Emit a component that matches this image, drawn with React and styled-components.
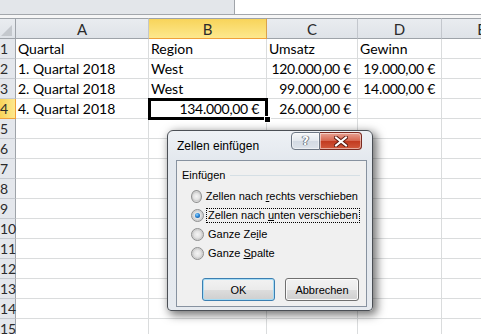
import React from 'react';
import styled, { createGlobalStyle, css } from 'styled-components';

const GlobalStyle = createGlobalStyle`
  html, body { margin: 0; padding: 0; background: #fff; overflow: hidden; }
  #root { width: 481px; height: 334px; position: relative; overflow: hidden; }
`;

const columns = ['A', 'B', 'C', 'D', 'E'];
const rows = [
  [{ t: 'Quartal' }, { t: 'Region' }, { t: 'Umsatz' }, { t: 'Gewinn' }, {}],
  [{ t: '1. Quartal 2018' }, { t: 'West' }, { t: '120.000,00 €', num: true }, { t: '19.000,00 €', num: true }, {}],
  [{ t: '2. Quartal 2018' }, { t: 'West' }, { t: '99.000,00 €', num: true }, { t: '14.000,00 €', num: true }, {}],
  [{ t: '4. Quartal 2018' }, { t: '134.000,00 €', num: true, selected: true }, { t: '26.000,00 €', num: true }, {}, {}],
];
while (rows.length < 15) rows.push([{}, {}, {}, {}, {}]);

const Sheet = styled.div`
  position: relative;
  width: 481px;
  height: 334px;
  font-family: Lato, 'Liberation Sans', sans-serif;
`;

const TopBar = styled.div`
  display: flex;
  height: 14px;
  border-bottom: 1px solid #a3a7ac;
`;

const TopLeft = styled.div`
  width: 234px;
  background: #e3e6ea;
  border-right: 1px solid #a0a4a9;
`;

const Gap = styled.div`
  height: 3px;
  background: #f6f6f6;
`;

const Grid = styled.div`
  display: grid;
  grid-template-columns: 16px 133px 118px 91px 84px 80px;
  grid-template-rows: 21px;
  grid-auto-rows: 20px;
  width: 522px;
`;

const HeadCell = styled.div`
  box-sizing: border-box;
  border-top: 1px solid #9ea3a9;
  border-bottom: 1px solid #9ea3a9;
  border-right: 1px solid #c3c7cd;
  background: linear-gradient(#e9ecf0, #dfe3e8);
  color: #2b2b2b;
  font-size: 15px;
  display: flex;
  align-items: center;
  justify-content: center;
  padding-top: 1px;
  ${(p) => p.$active && css`
    background: linear-gradient(#f8d45a, #fde88e);
    border-bottom-color: #f0a03a;
    border-right-color: #d9a24c;
  `}
`;

const Corner = styled(HeadCell)`
  position: relative;
  border-right-color: #9ea3a9;
  svg { position: absolute; left: 1px; bottom: 2px; }
`;

const RowHead = styled.div`
  box-sizing: border-box;
  border-right: 1px solid #9ea3a9;
  border-bottom: 1px solid #c5c9cf;
  background: #e4e7ec;
  color: #2b2b2b;
  font-size: 14px;
  line-height: 18px;
  padding-top: 1px;
  white-space: nowrap;
  ${(p) => p.$active && css`
    background: linear-gradient(90deg, #f8d45a, #fde88e);
    border-bottom-color: #f0a03a;
    border-right-color: #f0a03a;
  `}
`;

const Cell = styled.div`
  box-sizing: border-box;
  position: relative;
  border-right: 1px solid #dadcdd;
  border-bottom: 1px solid #dadcdd;
  font-size: 14px;
  color: #000;
  line-height: 18px;
  padding: 1px 6px 0 2px;
  white-space: nowrap;
  text-align: ${(p) => (p.$num ? 'right' : 'left')};
  letter-spacing: ${(p) => (p.$num ? '-0.3px' : '0')};
  ${(p) => p.$selected && css`
    z-index: 2;
    outline: 3px solid #000;
    outline-offset: -2px;
    padding-right: 7px;
    &::after {
      content: '';
      position: absolute;
      right: -5px;
      bottom: -5px;
      width: 5px;
      height: 5px;
      background: #000;
      border: 1px solid #fff;
    }
  `}
`;

/* dialog */

const Dialog = styled.div`
  position: absolute;
  left: 167px;
  top: 130px;
  width: 206px;
  height: 181px;
  box-sizing: border-box;
  border: 1px solid #4b4f55;
  border-radius: 6px 6px 4px 4px;
  background: linear-gradient(#eef1f5, #e3e8ee 30px, #e6eaef);
  box-shadow: 3px 3px 10px 1px rgba(0, 0, 0, 0.55);
  padding: 0 5px 4px 8px;
  font-family: 'Liberation Sans', Arial, sans-serif;
  color: #000;
`;

const TitleBar = styled.div`
  display: flex;
  align-items: flex-start;
  height: 29px;
`;

const Title = styled.div`
  font-size: 12px;
  line-height: 14px;
  padding: 8px 0 0 1px;
`;

const CaptionButtons = styled.div`
  display: flex;
  margin: 1px 5px 0 auto;
  height: 18px;
`;

const CapButton = styled.div`
  box-sizing: border-box;
  height: 18px;
  width: ${(p) => p.$w}px;
  display: flex;
  align-items: center;
  justify-content: center;
  border: 1px solid ${(p) => (p.$close ? '#7a2a20' : '#6d7784')};
  border-radius: ${(p) => (p.$close ? '0 4px 4px 0' : '4px 0 0 4px')};
  ${(p) => p.$close ? css`
    background: linear-gradient(#e8a293, #d5644d 50%, #c23a20 51%, #d1593c);
    border-left: none;
  ` : css`
    background: linear-gradient(#f6f8fa, #e3e8ee 50%, #d3dae3 51%, #dde3ea);
  `}
  box-shadow: inset 0 0 0 1px rgba(255, 255, 255, 0.5);
`;

const HelpGlyph = styled.span`
  font-family: 'DejaVu Sans', sans-serif;
  font-weight: bold;
  font-size: 12px;
  color: #fff;
  text-shadow: 0 0 1px #5a6470, 0 0 1px #5a6470, 1px 0 0 #7d8794, -1px 0 0 #7d8794;
`;

const Client = styled.div`
  box-sizing: border-box;
  height: 147px;
  border: 1px solid #8792a0;
  background: #f0f0f0;
  padding: 8px 6px 5px 5px;
  display: flex;
  flex-direction: column;
`;

const GroupHead = styled.div`
  display: flex;
  align-items: center;
  gap: 5px;
  font-size: 11px;
  line-height: 13px;
  &::after {
    content: '';
    flex: 1;
    height: 1px;
    background: #d5dfe5;
  }
`;

const RadioList = styled.div`
  margin: 5px 0 0 9px;
  display: flex;
  flex-direction: column;
`;

const RadioRow = styled.div`
  display: flex;
  align-items: center;
  height: 19px;
  gap: 2px;
`;

const RadioCircle = styled.span`
  box-sizing: border-box;
  width: 13px;
  height: 13px;
  border-radius: 50%;
  border: 1px solid #8e8f8f;
  background: radial-gradient(circle at 50% 50%, #f4f4f4 0, #e2e2e2 45%, #cdcdcd 60%, #f6f6f6 100%);
  display: flex;
  align-items: center;
  justify-content: center;
  ${(p) => p.$checked && css`
    &::after {
      content: '';
      width: 5px;
      height: 5px;
      border-radius: 50%;
      background: radial-gradient(circle at 40% 35%, #8fd3ff 0, #2a86d6 45%, #0b3f86 100%);
    }
  `}
`;

const RadioLabel = styled.span`
  font-size: 11px;
  line-height: 13px;
  padding: 0 1px;
  border: 1px dotted ${(p) => (p.$focus ? '#000' : 'transparent')};
  white-space: nowrap;
`;

const ButtonRow = styled.div`
  display: flex;
  justify-content: flex-end;
  gap: 10px;
  margin-top: auto;
  padding-right: 1px;
`;

const Button = styled.div`
  box-sizing: border-box;
  width: ${(p) => p.$w}px;
  height: 23px;
  border: 1px solid ${(p) => (p.$default ? '#3c7fb1' : '#707070')};
  border-radius: 3px;
  background: linear-gradient(#f2f2f2, #ebebeb 50%, #dddddd 51%, #cfcfcf);
  box-shadow: inset 0 0 0 1px ${(p) => (p.$default ? '#a6dcf5' : '#fbfbfb')};
  font-size: 11px;
  display: flex;
  align-items: center;
  justify-content: center;
`;

const radios = [
  { pre: 'Zellen nach ', key: 'r', post: 'echts verschieben' },
  { pre: 'Zellen nach ', key: 'u', post: 'nten verschieben', checked: true },
  { pre: 'Ganze Ze', key: 'i', post: 'le' },
  { pre: 'Ganze ', key: 'S', post: 'palte' },
];

const InsertDialog = () => (
  <Dialog>
    <TitleBar>
      <Title>Zellen einfügen</Title>
      <CaptionButtons>
        <CapButton $w={29}><HelpGlyph>?</HelpGlyph></CapButton>
        <CapButton $w={42} $close>
          <svg width="14" height="11" viewBox="0 0 14 11">
            <path d="M2 1.5 L12 9.5 M12 1.5 L2 9.5" stroke="#5b1a10" strokeWidth="4" strokeLinecap="square" />
            <path d="M2 1.5 L12 9.5 M12 1.5 L2 9.5" stroke="#fff" strokeWidth="2" strokeLinecap="square" />
          </svg>
        </CapButton>
      </CaptionButtons>
    </TitleBar>
    <Client>
      <GroupHead>Einfügen</GroupHead>
      <RadioList>
        {radios.map((r) => (
          <RadioRow key={r.post}>
            <RadioCircle $checked={r.checked} />
            <RadioLabel $focus={r.checked}>{r.pre}<u>{r.key}</u>{r.post}</RadioLabel>
          </RadioRow>
        ))}
      </RadioList>
      <ButtonRow>
        <Button $w={73} $default>OK</Button>
        <Button $w={74}>Abbrechen</Button>
      </ButtonRow>
    </Client>
  </Dialog>
);

export default function App() {
  return (
    <Sheet>
      <GlobalStyle />
      <TopBar><TopLeft /></TopBar>
      <Gap />
      <Grid>
        <Corner>
          <svg width="11" height="11" viewBox="0 0 11 11"><polygon points="11,0 11,11 0,11" fill="#c4c8cd" /></svg>
        </Corner>
        {columns.map((c) => (
          <HeadCell key={c} $active={c === 'B'}>{c}</HeadCell>
        ))}
        {rows.map((row, i) => (
          <React.Fragment key={i}>
            <RowHead $active={i === 3}>{i + 1}</RowHead>
            {row.map((cell, j) => (
              <Cell key={j} $num={cell.num} $selected={cell.selected}>{cell.t}</Cell>
            ))}
          </React.Fragment>
        ))}
      </Grid>
      <InsertDialog />
    </Sheet>
  );
}
